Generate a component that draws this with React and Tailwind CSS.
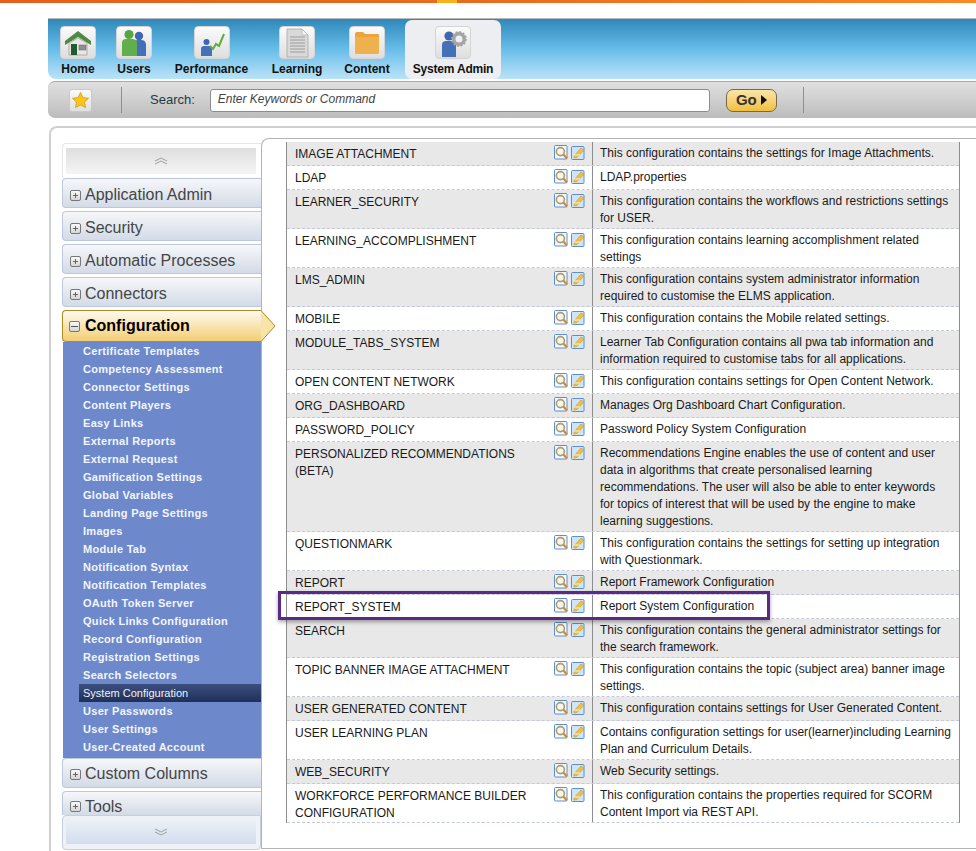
const tabs = [
  { label: 'Home', icon: 'home', item: 'w-[36px]' },
  { label: 'Users', icon: 'users', item: 'w-[36px] ml-[20px]' },
  { label: 'Performance', icon: 'performance', item: 'w-[75px] ml-[22px]' },
  { label: 'Learning', icon: 'learning', item: 'w-[50px] ml-[23px]' },
  { label: 'Content', icon: 'content', item: 'w-[44px] ml-[23px]' },
];

const topSections = ['Application Admin', 'Security', 'Automatic Processes', 'Connectors'];

const configLinks = [
  'Certificate Templates',
  'Competency Assessment',
  'Connector Settings',
  'Content Players',
  'Easy Links',
  'External Reports',
  'External Request',
  'Gamification Settings',
  'Global Variables',
  'Landing Page Settings',
  'Images',
  'Module Tab',
  'Notification Syntax',
  'Notification Templates',
  'OAuth Token Server',
  'Quick Links Configuration',
  'Record Configuration',
  'Registration Settings',
  'Search Selectors',
  'System Configuration',
  'User Passwords',
  'User Settings',
  'User-Created Account',
];

const rows = [
  ['IMAGE ATTACHMENT', 'This configuration contains the settings for Image Attachments.'],
  ['LDAP', 'LDAP.properties'],
  ['LEARNER_SECURITY', 'This configuration contains the workflows and restrictions settings for USER.'],
  ['LEARNING_ACCOMPLISHMENT', 'This configuration contains learning accomplishment related settings'],
  ['LMS_ADMIN', 'This configuration contains system administrator information required to customise the ELMS application.'],
  ['MOBILE', 'This configuration contains the Mobile related settings.'],
  ['MODULE_TABS_SYSTEM', 'Learner Tab Configuration contains all pwa tab information and information required to customise tabs for all applications.'],
  ['OPEN CONTENT NETWORK', 'This configuration contains settings for Open Content Network.'],
  ['ORG_DASHBOARD', 'Manages Org Dashboard Chart Configuration.'],
  ['PASSWORD_POLICY', 'Password Policy System Configuration'],
  ['PERSONALIZED RECOMMENDATIONS (BETA)', 'Recommendations Engine enables the use of content and user data in algorithms that create personalised learning recommendations. The user will also be able to enter keywords for\u00a0topics of interest that will be used by the engine to make learning suggestions.'],
  ['QUESTIONMARK', 'This configuration contains the settings for setting up integration with Questionmark.'],
  ['REPORT', 'Report Framework Configuration'],
  ['REPORT_SYSTEM', 'Report System Configuration'],
  ['SEARCH', 'This configuration contains the general administrator settings for the search framework.'],
  ['TOPIC BANNER IMAGE ATTACHMENT', 'This configuration contains the topic (subject area) banner image settings.'],
  ['USER GENERATED CONTENT', 'This configuration contains settings for User Generated Content.'],
  ['USER LEARNING PLAN', 'Contains configuration settings for user(learner)including Learning Plan and Curriculum Details.'],
  ['WEB_SECURITY', 'Web Security settings.'],
  ['WORKFORCE PERFORMANCE BUILDER CONFIGURATION', 'This configuration contains the properties required for SCORM Content Import via REST API.'],
];

const TabIcon = ({ name }) => {
  if (name === 'home') {
    return (
      <svg width="28" height="28" viewBox="0 0 28 28">
        <path d="M14 2 L27 12 V16 L14 8 L1 16 V12 Z" fill="#4f8a45" />
        <path d="M5 14 L14 9 L23 14 V26 H5 Z" fill="#e9e7df" stroke="#8b8b80" strokeWidth="0.6" />
        <rect x="7" y="15" width="6" height="11" fill="#1f5c34" />
        <rect x="15" y="16" width="7" height="5" fill="#8d8da0" stroke="#666" strokeWidth="0.5" />
      </svg>
    );
  }
  if (name === 'users') {
    return (
      <svg width="28" height="28" viewBox="0 0 28 28">
        <circle cx="19" cy="7" r="4.2" fill="#3f67ad" />
        <path d="M14 27 V15 Q14 11 18 11 H21 Q26 11 26 16 V27 Z" fill="#4470b8" />
        <circle cx="9" cy="5.5" r="4.6" fill="#55a544" />
        <path d="M2 27 V14 Q2 10 6 10 H12 Q17 10 17 14 V27 Z" fill="#62ad4c" />
      </svg>
    );
  }
  if (name === 'performance') {
    return (
      <svg width="28" height="28" viewBox="0 0 28 28">
        <circle cx="8.5" cy="13" r="3" fill="#3f67ad" />
        <path d="M3 27 V20 Q3 17 6 17 H11 Q14 17 14 20 V27 Z" fill="#4470b8" />
        <path d="M12 17 L15 20 L18 15 L21 17 L26 5" fill="none" stroke="#5fae3a" strokeWidth="2" />
      </svg>
    );
  }
  if (name === 'learning') {
    return (
      <svg width="28" height="30" viewBox="0 0 28 30">
        <path d="M4 1 H19 L25 7 V29 H4 Z" fill="#d9d9d9" stroke="#a8a8a8" strokeWidth="0.8" />
        <path d="M19 1 V7 H25 Z" fill="#f3f3f3" stroke="#a8a8a8" strokeWidth="0.6" />
        <path d="M7 9 H22 M7 12 H22 M7 15 H22 M7 18 H22 M7 21 H22 M7 24 H22" stroke="#9c9c9c" strokeWidth="1" />
      </svg>
    );
  }
  if (name === 'content') {
    return (
      <svg width="26" height="24" viewBox="0 0 26 24">
        <path d="M1 3 Q1 1 3 1 H9 L11 3 H24 Q25 3 25 5 V21 Q25 23 23 23 H3 Q1 23 1 21 Z" fill="#e9a53c" />
        <path d="M1 6 H25 V21 Q25 23 23 23 H3 Q1 23 1 21 Z" fill="#efb14e" />
      </svg>
    );
  }
  return (
    <svg width="28" height="30" viewBox="0 0 28 30">
      <circle cx="10" cy="8" r="4.6" fill="#3f67ad" />
      <path d="M3 29 V17 Q3 13 7 13 H13 Q17 13 17 17 V29 Z" fill="#4470b8" />
      <circle cx="20" cy="11" r="5.2" fill="none" stroke="#a5a5a5" strokeWidth="3.4" />
      <circle cx="20" cy="11" r="7" fill="none" stroke="#a5a5a5" strokeWidth="1.8" strokeDasharray="2 1.66" />
    </svg>
  );
};

const Tile = ({ name }) => (
  <div className="w-[36px] h-[33px] rounded-[4px] border border-[#d4d4d4] bg-gradient-to-b from-[#fbfbfb] to-[#dedede] flex items-center justify-center overflow-hidden">
    <TabIcon name={name} />
  </div>
);

const PlusBox = ({ minus }) => (
  <span className="w-[11px] h-[11px] shrink-0 rounded-[2px] border border-[#777] bg-gradient-to-b from-[#fafafa] to-[#d5d5d5] flex items-center justify-center relative">
    <span className={minus ? 'w-[7px] h-px bg-[#555]' : 'w-[5px] h-[1px] bg-[#666]'} />
    {!minus && <span className="absolute w-[1px] h-[5px] bg-[#666]" />}
  </span>
);

const SectionHeader = ({ label, shape }) => (
  <div className={`${shape} mb-[3px] w-[199px] border-l border-t border-[#bcc8e0] bg-gradient-to-b from-[#f6f7f9] to-[#d3dbe7] flex items-center gap-[4px] pl-[7px] shrink-0`}>
    <PlusBox />
    <span className="text-[16px] text-[#454545]">{label}</span>
  </div>
);

const Chevrons = ({ down }) => (
  <svg width="14" height="8" viewBox="0 0 14 8" className={down ? 'rotate-180' : ''}>
    <path d="M1 4 L7 1 L13 4 M1 7 L7 4 L13 7" fill="none" stroke="#a9a9a9" strokeWidth="1.1" />
  </svg>
);

const ActionIcons = () => (
  <div className="flex gap-[3px] shrink-0 mt-[-1px]">
    <svg width="14" height="15" viewBox="0 0 14 15">
      <rect x="0.5" y="0.5" width="12.5" height="13.5" rx="1" fill="#f5f8fc" stroke="#5a8ed0" />
      <circle cx="6.4" cy="6.6" r="4" fill="#f7f7ee" stroke="#b09a68" strokeWidth="1.6" />
      <path d="M9.4 9.6 L13 13.6" stroke="#c28f45" strokeWidth="2.2" />
    </svg>
    <svg width="14" height="15" viewBox="0 0 14 15">
      <rect x="0.5" y="1.5" width="12.5" height="13" rx="1" fill="#cfe4f7" stroke="#5a8ed0" />
      <path d="M3 11 L10 3 L13 5 L6 12.5 L3 13 Z" fill="#f0c23c" stroke="#c79422" strokeWidth="0.6" />
      <path d="M3 10 H9" stroke="#ffffff" strokeWidth="0.8" />
    </svg>
  </div>
);

const App = () => {
  return (
    <div className="w-[976px] h-[851px] overflow-hidden bg-white relative font-['Liberation_Sans',Arial,sans-serif]">
      {/* Top strip */}
      <div className="h-[3px] bg-gradient-to-r from-[#e2601c] via-[#e86c20] to-[#f98a24] relative">
        <div className="absolute left-[437px] top-0 w-[20px] h-[3px] bg-[#f7b21f]" />
      </div>

      <div className="pl-[48px] pt-[15px]">
        {/* Module tabs */}
        <div className="h-[61px] border-t border-[#b9b9b9] rounded-bl-[8px] bg-gradient-to-b from-[#2f88ba] via-[#66bde9] to-[#b9e3f8] flex items-start pl-[12px]">
          <div className="flex items-start pt-[7px]">
            {tabs.map((tab) => (
              <div key={tab.label} className={`${tab.item} flex flex-col items-center`}>
                <Tile name={tab.icon} />
                <span className="mt-[2px] text-[12px] leading-[16px] font-bold text-[#111] whitespace-nowrap">{tab.label}</span>
              </div>
            ))}
          </div>
          <div className="ml-[16px] mt-[1px] w-[96px] h-[59px] rounded-[7px] bg-[#eceef2] flex flex-col items-center pt-[6px]">
            <Tile name="admin" />
            <span className="mt-[2px] text-[12px] leading-[16px] font-bold text-[#111] tracking-[-0.2px]">System Admin</span>
          </div>
        </div>

        {/* Search bar */}
        <div className="mt-[2px] h-[37px] rounded-l-[7px] border-t border-[#a9a9a9] bg-gradient-to-b from-[#e0e0e0] via-[#cfcfcf] to-[#bcbcbc] flex items-center pl-[21px]">
          <div className="w-[23px] h-[23px] rounded-[3px] border border-[#c9c9c9] bg-gradient-to-b from-[#fafafa] to-[#dfdfdf] flex items-center justify-center">
            <svg width="17" height="16" viewBox="0 0 17 16">
              <path d="M8.5 0.5 L11 5.6 L16.5 6.3 L12.5 10.2 L13.6 15.6 L8.5 13 L3.4 15.6 L4.5 10.2 L0.5 6.3 L6 5.6 Z" fill="#f8c51c" stroke="#d59a1c" strokeWidth="0.8" />
            </svg>
          </div>
          <div className="ml-[29px] w-px h-[26px] bg-[#8e8e8e]" />
          <span className="ml-[28px] text-[13px] text-[#1e3c44]">Search:</span>
          <div className="ml-[15px] w-[500px] h-[23px] rounded-[3px] border border-[#8c8c8c] bg-white flex items-center pl-[7px] pb-[2px]">
            <span className="text-[12px] italic text-[#444]">Enter Keywords or Command</span>
          </div>
          <div className="ml-[16px] w-[51px] h-[23px] rounded-[7px] border border-[#77684a] bg-gradient-to-b from-[#f8e7a8] to-[#f0bf3a] flex items-center justify-center gap-[4px]">
            <span className="text-[15px] font-bold text-[#333]">Go</span>
            <svg width="6" height="10" viewBox="0 0 6 10"><path d="M0 0 L6 5 L0 10 Z" fill="#111" /></svg>
          </div>
          <div className="ml-[26px] w-px h-[26px] bg-[#8e8e8e]" />
        </div>

        {/* Main panel */}
        <div className="mt-[8px] ml-px h-[730px] rounded-tl-[8px] border-l-2 border-t-2 border-[#d0d0d0] flex pl-[11px]">
          {/* Sidebar */}
          <div className="w-[199px] mt-[15px] h-[706px] flex flex-col shrink-0 relative z-10">
            <div className="h-[35px] shrink-0 rounded-tl-[4px] border-l border-t border-[#e6e6e6] pl-[3px] pt-[4px]">
              <div className="w-[190px] h-[26px] bg-gradient-to-b from-[#dedede] to-[#f5f5f5] flex items-center justify-center">
                <Chevrons />
              </div>
            </div>
            {topSections.map((s) => (
              <SectionHeader key={s} label={s} shape="h-[30px] rounded-l-[4px] border-b pt-[4px]" />
            ))}
            <div className="relative h-[32px] w-[199px] shrink-0 rounded-l-[4px] border border-r-0 border-[#b08a20] bg-gradient-to-b from-[#fdfaf0] to-[#f3cd6f] flex items-center gap-[5px] pl-[6px]">
              <PlusBox minus />
              <span className="text-[16px] font-bold text-black">Configuration</span>
              <svg width="15" height="32" viewBox="0 0 15 32" className="absolute left-[198px] top-[-1px]">
                <path d="M0 0.5 L14 16 L0 31.5 Z" fill="#f8e3a8" />
                <path d="M0 0.5 L14 16 L0 31.5" fill="none" stroke="#b08a20" />
              </svg>
            </div>
            <div className="ml-px w-[198px] bg-[#6d89cc] h-[416px] shrink-0 flex flex-col pl-[20px]">
              {configLinks.map((link) =>
                link === 'System Configuration' ? (
                  <div key={link} className="ml-[-4px] pl-[4px] h-[18px] shrink-0 bg-gradient-to-b from-[#3c5080] to-[#1f2f58] text-[11px] leading-[18px] text-[#eef1f8]">
                    {link}
                  </div>
                ) : (
                  <div key={link} className="h-[18px] shrink-0 text-[11px] leading-[18px] font-bold text-[#f3f5fb] tracking-[0.3px]">
                    {link}
                  </div>
                )
              )}
            </div>
            <SectionHeader label="Custom Columns" shape="h-[30px] rounded-l-[4px] border-b pt-[2px]" />
            <SectionHeader label="Tools" shape="h-[24px] rounded-tl-[4px] pt-[6px]" />
            <div className="mt-[-3px] h-[35px] shrink-0 rounded-b-[4px] rounded-tl-[4px] border border-[#c4cfe2] bg-[#eef1f6] pl-[3px] pt-[3px]">
              <div className="w-[190px] h-[25px] bg-gradient-to-b from-[#eef1f6] to-[#d3ddef] flex items-center justify-center">
                <Chevrons down />
              </div>
            </div>
          </div>

          {/* Config table panel */}
          <div className="flex-1 mt-[10px] h-[711px] rounded-tl-[8px] border-l border-t border-b border-[#b4b4b4] pl-[24px] pt-[3px]">
            <div className="w-[674px] border-l border-r border-[#8d8d8d] text-[12px] leading-[17px] text-[#1a1a1a]">
              {rows.map(([name, desc], i) => (
                <div key={name} className={`flex min-h-[24px] border-b border-dashed border-[#c3c8dc] ${i % 2 === 0 ? 'bg-[#e8e8e8]' : 'bg-white'}`}>
                  <div className="w-[306px] shrink-0 border-r border-[#8d8d8d] flex justify-between pl-[8px] pr-[7px] pt-[4px]">
                    <span className="w-[236px]">{name}</span>
                    <ActionIcons />
                  </div>
                  <div className="flex-1 pl-[7px] pr-[6px] pt-[3px] pb-[1px]">{desc}</div>
                </div>
              ))}
            </div>
          </div>
        </div>
      </div>

      {/* Highlight around REPORT_SYSTEM */}
      <div className="absolute left-[278px] top-[591px] w-[492px] h-[29px] border-[3px] border-[#5b2a86] shadow-[0_2px_4px_rgba(0,0,0,0.35)]" />
    </div>
  );
};

export default App;
